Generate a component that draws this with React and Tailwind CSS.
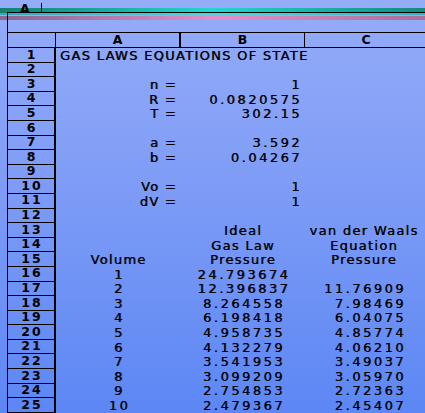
import React from "react";

const ideal = ["24.793674","12.396837","8.264558","6.198418","4.958735","4.132279","3.541953","3.099209","2.754853","2.479367"];
const vdw = ["","11.76909","7.98469","6.04075","4.85774","4.06210","3.49037","3.05970","2.72363","2.45407"];

const rows = [];
rows.push({ n: 1, title: "GAS LAWS EQUATIONS OF STATE" });
rows.push({ n: 2 });
rows.push({ n: 3, label: "n =", val: "1" });
rows.push({ n: 4, label: "R =", val: "0.0820575" });
rows.push({ n: 5, label: "T =", val: "302.15" });
rows.push({ n: 6 });
rows.push({ n: 7, label: "a =", val: "3.592" });
rows.push({ n: 8, label: "b =", val: "0.04267" });
rows.push({ n: 9 });
rows.push({ n: 10, label: "Vo =", val: "1" });
rows.push({ n: 11, label: "dV =", val: "1" });
rows.push({ n: 12 });
rows.push({ n: 13, hb: "Ideal", hc: "van der Waals" });
rows.push({ n: 14, hb: "Gas Law", hc: "Equation" });
rows.push({ n: 15, ha: "Volume", hb: "Pressure", hc: "Pressure" });
for (let i = 0; i < 10; i++) {
  rows.push({ n: 16 + i, vol: String(i + 1), ig: ideal[i], vw: vdw[i] });
}

function Row({ r }) {
  return (
    <div className="flex h-[14.6px] items-center">
      <div className="w-[48px] h-full border-b border-r-2 border-black flex items-center justify-center font-bold tracking-[2px] pl-[2px] text-[12.5px]">
        {r.n}
      </div>
      <div className="w-[125px] h-full flex items-center whitespace-nowrap [text-shadow:0.6px_0_0_rgba(0,0,0,0.7)]">
        {r.title && <span className="pl-[4px] tracking-[1.3px]">{r.title}</span>}
        {r.label && <span className="ml-auto pr-[4px] tracking-[1.3px]">{r.label}</span>}
        {r.ha && <span className="mx-auto tracking-[1.3px]">{r.ha}</span>}
        {r.vol && <span className="mx-auto tracking-[2.5px] pl-[2px]">{r.vol}</span>}
      </div>
      <div className="w-[124px] h-full flex items-center whitespace-nowrap [text-shadow:0.6px_0_0_rgba(0,0,0,0.7)]">
        {r.val && <span className="ml-auto pr-[3px] tracking-[2.5px]">{r.val}</span>}
        {r.hb && <span className="mx-auto tracking-[1.3px]">{r.hb}</span>}
        {r.ig && <span className="mx-auto tracking-[2.5px] pl-[2px]">{r.ig}</span>}
      </div>
      <div className="flex-1 h-full flex items-center whitespace-nowrap [text-shadow:0.6px_0_0_rgba(0,0,0,0.7)]">
        {r.hc && <span className="mx-auto tracking-[1.3px] pr-[2px]">{r.hc}</span>}
        {r.vw && <span className="ml-auto pr-[19px] tracking-[2.5px]">{r.vw}</span>}
      </div>
    </div>
  );
}

export default function App() {
  return (
    <div
      className="w-[425px] h-[413px] overflow-hidden flex flex-col text-black bg-[linear-gradient(180deg,#95acf8_0%,#7e9cf6_45%,#5c87f4_100%)] text-[13px] leading-none"
      style={{ fontFamily: '"DejaVu Sans", sans-serif' }}
    >
      <div className="h-[8px] relative shrink-0">
        <span className="absolute left-[20px] top-[3px] font-bold z-10 text-[12.5px]">A</span>
        <span className="absolute left-[41px] top-[3px] w-[1px] h-[9px] bg-black z-10" />
      </div>
      <div className="h-[4px] shrink-0 bg-[linear-gradient(90deg,#14806e,#22d8d0_50%,#168a7e)]" />
      <div className="flex flex-1 min-h-0">
        <div className="w-[7px] shrink-0 flex flex-col">
          <div className="h-[1px] bg-[#14806e]" />
          <div className="h-[2px] bg-[#38a8c0]" />
          <div className="h-[1px]" />
          <div className="h-[4px] bg-[#8a6890]" />
        </div>
        <div className="flex-1 border-l border-t border-black flex flex-col min-w-0">
          <div className="h-[2px] shrink-0 bg-[linear-gradient(90deg,#38a8c0,#4ad8e0_50%,#38b0c8)]" />
          <div className="h-[1px] shrink-0" />
          <div className="h-[4px] shrink-0 bg-[linear-gradient(90deg,#8a6890,#e092c8_50%,#a87098)]" />
          <div className="h-[12px] shrink-0" />
          <div className="h-[16px] shrink-0 border-t border-b border-black flex font-bold text-[12.5px]">
            <div className="w-[48px] border-r border-black" />
            <div className="w-[125px] border-r-2 border-black flex items-center justify-center">A</div>
            <div className="w-[124px] border-r border-black flex items-center justify-center">B</div>
            <div className="flex-1 flex items-center justify-center pl-[2px]">C</div>
          </div>
          {rows.map((r) => (
            <Row key={r.n} r={r} />
          ))}
        </div>
      </div>
    </div>
  );
}
